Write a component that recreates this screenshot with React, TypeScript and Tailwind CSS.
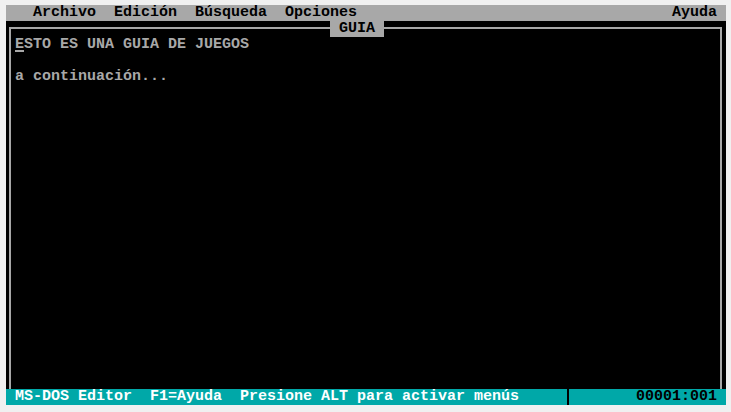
const font = { fontFamily: '"Liberation Mono", "DejaVu Sans Mono", monospace' };

const App = () => {
    return (
        <div className="w-full h-screen bg-[#f0f0f0] pt-[5px] pl-[6px]">
            <div
                className="w-[720px] h-[400px] bg-black flex flex-col text-[15px] leading-[16px] font-bold whitespace-pre"
                style={font}
            >
                {/* menu bar */}
                <div className="h-[16px] bg-[#a8a8a8] text-black flex">
                    <span>{"   Archivo  Edición  Búsqueda  Opciones"}</span>
                    <span className="flex-1" />
                    <span>{"Ayuda "}</span>
                </div>

                {/* editor window */}
                <div className="relative flex-1 pt-[6px] pl-[3px] pr-[4px] flex flex-col">
                    <div className="flex-1 border-l-2 border-r-2 border-t-2 border-[#a8a8a8] pt-[8px] pl-[4px] text-[#a8a8a8]">
                        <p className="h-[16px]">
                            <span className="relative">
                                E
                                <span className="absolute left-0 right-0 bottom-[1px] h-[2px] bg-[#a8a8a8]" />
                            </span>
                            STO ES UNA GUIA DE JUEGOS
                        </p>
                        <p className="h-[16px]" />
                        <p className="h-[16px]">a continuación...</p>
                    </div>
                    <div className="absolute top-0 left-[324px] w-[54px] h-[16px] bg-[#a8a8a8] text-black text-center">
                        GUIA
                    </div>
                </div>

                {/* status bar */}
                <div className="h-[16px] bg-[#00a8a8] flex">
                    <span className="w-[558px] text-white">{" MS-DOS Editor  F1=Ayuda  Presione ALT para activar menús"}</span>
                    <span className="w-[9px] flex">
                        <span className="ml-[3px] w-[2px] h-full bg-black" />
                    </span>
                    <span className="flex-1 text-right text-black">{"00001:001 "}</span>
                </div>
            </div>
        </div>
    )
}

export default App
